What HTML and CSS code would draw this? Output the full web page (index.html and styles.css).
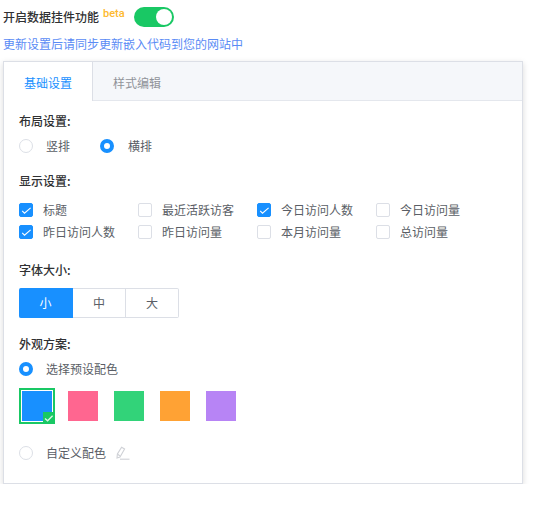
FILE: index.html
```html
<!DOCTYPE html>
<html lang="en">
<head>
    <meta charset="UTF-8">
    <meta name="viewport" content="width=device-width, initial-scale=1.0">
    <title>数据挂件设置</title>
    <link rel="stylesheet" href="styles.css">
</head>
<body>
    <div class="widget-toggle">
        <span class="toggle-label">开启数据挂件功能</span>
        <sup class="beta">beta</sup>
        <span class="switch"><span class="switch-knob"></span></span>
    </div>
    <p class="sync-tip">更新设置后请同步更新嵌入代码到您的网站中</p>

    <div class="card">
        <div class="tabs">
            <div class="tab active">基础设置</div>
            <div class="tab">样式编辑</div>
        </div>
        <div class="card-body">
            <h4 class="first">布局设置:</h4>
            <div class="radio-row">
                <label class="radio"><i class="radio-dot"></i>竖排</label>
                <label class="radio on"><i class="radio-dot"></i>横排</label>
            </div>

            <h4 class="display-title">显示设置:</h4>
            <div class="check-grid">
                <label class="check on"><i class="check-box"><svg viewBox="0 0 12 12"><path d="M2.2 6.8l2.3 2.4 6.1-5.4"/></svg></i>标题</label>
                <label class="check"><i class="check-box"></i>最近活跃访客</label>
                <label class="check on"><i class="check-box"><svg viewBox="0 0 12 12"><path d="M2.2 6.8l2.3 2.4 6.1-5.4"/></svg></i>今日访问人数</label>
                <label class="check"><i class="check-box"></i>今日访问量</label>
                <label class="check on"><i class="check-box"><svg viewBox="0 0 12 12"><path d="M2.2 6.8l2.3 2.4 6.1-5.4"/></svg></i>昨日访问人数</label>
                <label class="check"><i class="check-box"></i>昨日访问量</label>
                <label class="check"><i class="check-box"></i>本月访问量</label>
                <label class="check"><i class="check-box"></i>总访问量</label>
            </div>

            <h4 class="size-title">字体大小:</h4>
            <div class="size-group">
                <span class="size-btn on">小</span>
                <span class="size-btn">中</span>
                <span class="size-btn">大</span>
            </div>

            <h4 class="look-title">外观方案:</h4>
            <label class="radio on preset"><i class="radio-dot"></i>选择预设配色</label>
            <div class="swatches">
                <span class="swatch-picked">
                    <span class="swatch blue"></span>
                    <span class="picked-mark"><svg viewBox="0 0 12 12"><path d="M2 6.4l2.6 2.4 5-5"/></svg></span>
                </span>
                <span class="swatch pink"></span>
                <span class="swatch green"></span>
                <span class="swatch orange"></span>
                <span class="swatch purple"></span>
            </div>
            <label class="radio custom"><i class="radio-dot"></i>自定义配色
                <svg class="pencil" viewBox="0 0 14 14"><path d="M1 12l.4-4L5.6 1.2l3 1.8L4 11z"/><path d="M1.4 8L4 10"/><path d="M4 13.2h9.5"/></svg>
            </label>
        </div>
    </div>
</body>
</html>
```

FILE: styles.css
```css
body {
    margin: 0;
    padding: 7px 15px 0 3px;
    font-family: "Noto Sans CJK SC", "Liberation Sans", sans-serif;
    font-size: 12px;
    line-height: 20px;
    color: #5a5e66;
    background-color: #fff;
}
.widget-toggle {
    display: flex;
    align-items: flex-start;
    height: 20px;
}
.toggle-label {
    font-weight: 500;
    color: #303133;
}
.beta {
    margin-left: 4px;
    padding-top: 1px;
    font-family: Roboto, sans-serif;
    font-size: 11px;
    font-weight: 500;
    line-height: 12px;
    color: #fdb92e;
}
.switch {
    position: relative;
    width: 40px;
    height: 20px;
    margin-left: 9px;
    border-radius: 10px;
    background-color: #19c864;
}
.switch-knob {
    position: absolute;
    top: 2px;
    right: 2px;
    width: 16px;
    height: 16px;
    border-radius: 50%;
    background-color: #fff;
}
.sync-tip {
    margin: 7px 0 7px;
    color: #5a8bf5;
}
.card {
    height: 421px;
    border: 1px solid #dcdfe6;
    box-shadow: 0 2px 6px rgba(0,0,0,0.15);
}
.tabs {
    display: flex;
    height: 38px;
    background-color: #f5f7fa;
    border-bottom: 1px solid #e4e7ed;
}
.tab {
    padding: 0 20px;
    line-height: 42px;
    color: #909399;
}
.tab.active {
    box-sizing: border-box;
    width: 89px;
    height: 39px;
    padding: 0;
    text-align: center;
    color: #1890ff;
    background-color: #fff;
    border-right: 1px solid #dcdfe6;
}
.card-body {
    padding: 10px 15px;
}
h4 {
    margin: 0;
    font-size: 12px;
    font-weight: 500;
    color: #303133;
}
.radio-row {
    display: flex;
    gap: 30px;
    margin-top: 5px;
}
.radio {
    display: flex;
    align-items: center;
    height: 20px;
}
.radio-dot {
    box-sizing: border-box;
    width: 14px;
    height: 14px;
    margin-right: 13px;
    border: 1px solid #dcdfe6;
    border-radius: 50%;
    background-color: #fff;
}
.radio.on .radio-dot {
    border: 4.5px solid #1890ff;
}
.radio-row .on .radio-dot {
    margin-right: 14px;
}
.display-title {
    margin-top: 15px;
}
.check-grid {
    display: grid;
    grid-template-columns: repeat(4, 119px);
    grid-auto-rows: 22px;
    margin-top: 8px;
}
.check {
    display: flex;
    align-items: center;
}
.check-box {
    box-sizing: border-box;
    width: 14px;
    height: 14px;
    margin-right: 10px;
    border: 1px solid #dcdfe6;
    border-radius: 2px;
    background-color: #fff;
}
.check.on .check-box {
    border-color: #1890ff;
    background-color: #1890ff;
}
.check-box svg {
    display: block;
    width: 12px;
    height: 12px;
}
.check-box path {
    fill: none;
    stroke: #fff;
    stroke-width: 1.1;
}
.size-title {
    margin-top: 17px;
}
.size-group {
    display: flex;
    width: 160px;
    height: 30px;
    margin-top: 8px;
}
.size-btn {
    flex: 1;
    line-height: 28px;
    text-align: center;
    border: 1px solid #dcdfe6;
    border-left: none;
}
.size-btn:first-child {
    flex: none;
    box-sizing: border-box;
    width: 54px;
    border-radius: 2px 0 0 2px;
}
.size-btn:last-child {
    border-radius: 0 2px 2px 0;
}
.size-btn.on {
    color: #fff;
    border-color: #1890ff;
    background-color: #1890ff;
}
.look-title {
    margin-top: 16px;
}
.preset {
    margin-top: 5px;
}
.swatches {
    display: flex;
    align-items: center;
    gap: 16px;
    margin-top: 9px;
}
.swatch {
    display: block;
    width: 30px;
    height: 30px;
}
.swatch-picked {
    position: relative;
    box-sizing: border-box;
    width: 36px;
    height: 36px;
    margin-right: -3px;
    border: 2px solid #19c864;
    padding: 1px;
    background-color: #fff;
}
.picked-mark {
    position: absolute;
    right: -2px;
    bottom: -2px;
    width: 12px;
    height: 12px;
    background-color: #19c864;
}
.picked-mark svg {
    display: block;
}
.picked-mark path {
    fill: none;
    stroke: #d9f7e5;
    stroke-width: 1.3;
}
.blue { background-color: #1890ff; }
.pink { background-color: #ff6690; }
.green { background-color: #32d379; }
.orange { background-color: #ffa234; }
.purple { background-color: #b784f5; }
.custom {
    margin-top: 19px;
}
.pencil {
    width: 14px;
    height: 14px;
    margin-left: 10px;
}
.pencil path {
    fill: none;
    stroke: #cfd1d6;
    stroke-width: 1.1;
}
```
